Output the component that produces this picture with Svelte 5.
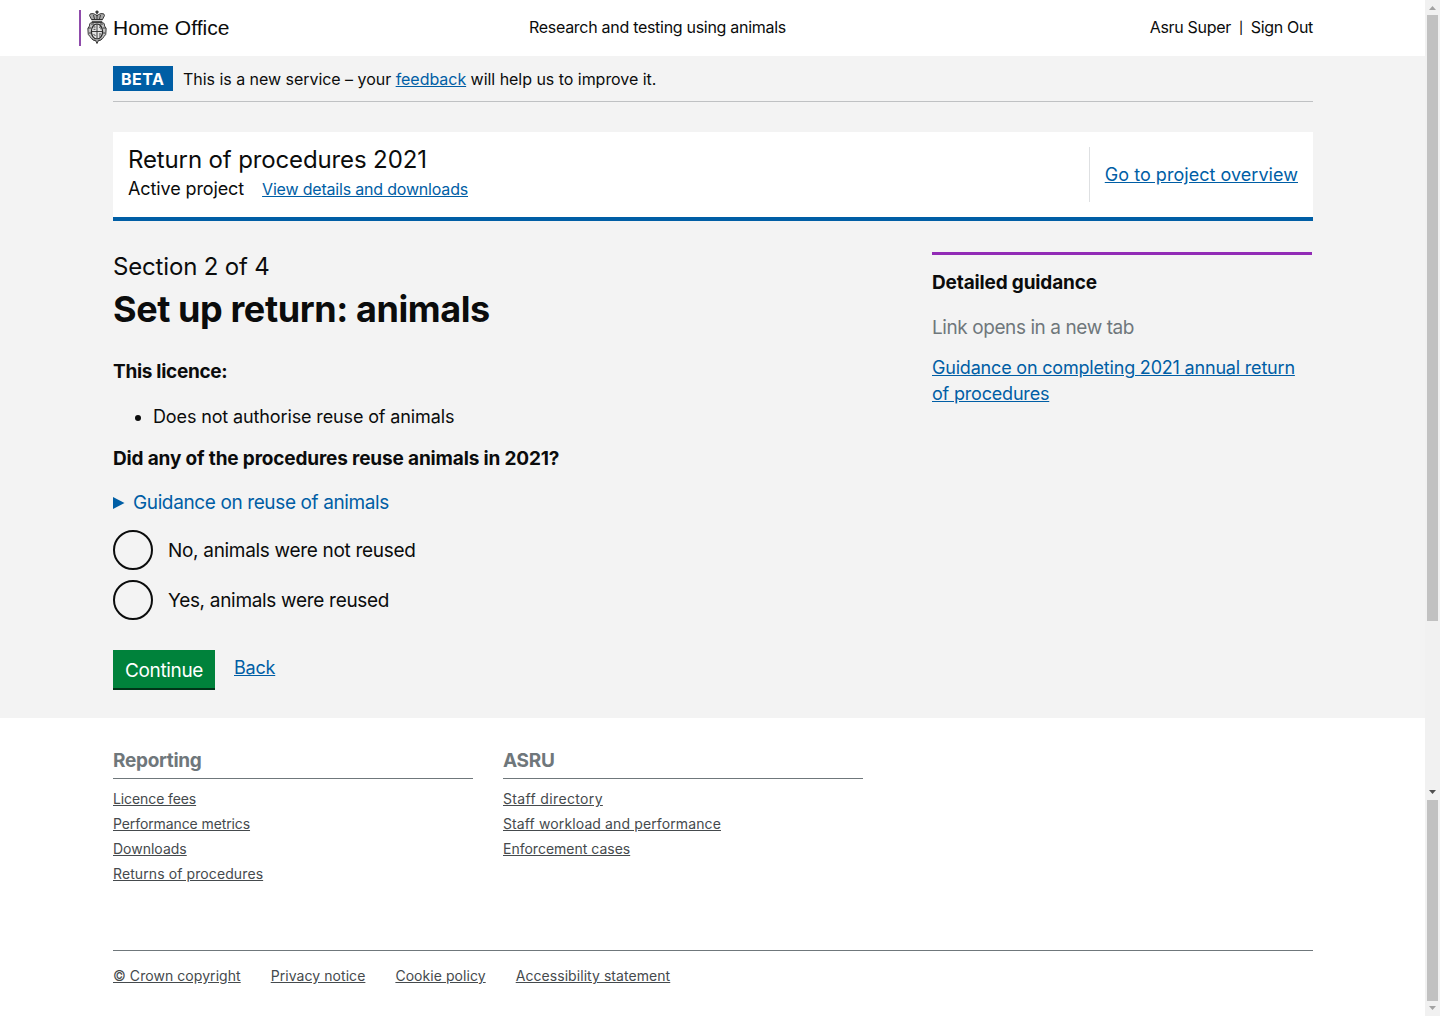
<script>
  const options = ['No, animals were not reused', 'Yes, animals were reused'];
  const columns = [
    { title: 'Reporting', links: ['Licence fees', 'Performance metrics', 'Downloads', 'Returns of procedures'] },
    { title: 'ASRU', links: ['Staff directory', 'Staff workload and performance', 'Enforcement cases'] }
  ];
  const legal = ['© Crown copyright', 'Privacy notice', 'Cookie policy', 'Accessibility statement'];
</script>

<div class="window">
  <div class="page">
    <header>
      <div class="logo">
        <svg class="crest" width="20" height="36" viewBox="0 0 20 36" fill="none" stroke="#2a2a2a" stroke-width="0.9">
          <path d="M10 0.500v4M8.400 2h3.200" stroke-width="1.400" />
          <path d="M2.500 5.500Q2.500 3 6 3.600Q8.500 4 10 6Q11.500 4 14 3.600Q17.500 3 17.500 5.500L15.500 9.500H4.500Z" fill="#aaa" />
          <path d="M4.500 9.700h11M4.800 11.400h10.400M10 5v4M6.500 5l1 4M13.500 5l-1 4" />
          <path d="M4.500 12.500Q2 13 2.500 16Q0 18 1 21Q.5 25 3 26.500Q4 29 7 30H13Q16 29 17 26.500Q19.500 25 19 21Q20 18 17.500 16Q18 13 15.500 12.500Z" fill="#c4c4c4" />
          <ellipse cx="10" cy="21.500" rx="5.600" ry="7.500" fill="#e4e4e4" stroke-width="1.200" />
          <path d="M10 14v15M4.500 21.500h11M6.500 17h2M6.500 19.300h2M12 17.500q2-2 2 0v2M6.500 24l2 2M12 24h2M12 26h1.500M1 18h3M16 18h3M2 23h2.500M15.500 23h2.500M4 14h3M13 14h3" />
          <path d="M5 29q2 2 3.500 1.500L10 33.500l1.500-3Q13 31 15 29" fill="#999" />
        </svg>
        <span>Home Office</span>
      </div>
      <div class="service">Research and testing using animals</div>
      <div class="user"><span>Asru Super</span><span class="divider">|</span><span>Sign Out</span></div>
    </header>

    <main>
      <div class="phase">
        <strong>BETA</strong>
        <span>This is a new service – your <a href="#feedback">feedback</a> will help us to improve it.</span>
      </div>

      <section class="banner">
        <div>
          <h2>Return of procedures 2021</h2>
          <div class="status"><span>Active project</span><a href="#details">View details and downloads</a></div>
        </div>
        <div class="overview"><a href="#overview">Go to project overview</a></div>
      </section>

      <div class="columns">
        <div class="form">
          <div class="section">Section 2 of 4</div>
          <h1>Set up return: animals</h1>
          <h3 class="licence">This licence:</h3>
          <ul><li>Does not authorise reuse of animals</li></ul>
          <h3>Did any of the procedures reuse animals in 2021?</h3>
          <div class="summary">
            <svg width="12" height="12" viewBox="0 0 12 12"><path d="M0 0L11.500 6L0 12Z" fill="#005ea5" /></svg>
            <span>Guidance on reuse of animals</span>
          </div>
          <div class="radios">
            {#each options as option}
              <div class="radio"><i></i><span>{option}</span></div>
            {/each}
          </div>
          <div class="actions"><button>Continue</button><a href="#back">Back</a></div>
        </div>
        <aside>
          <h3>Detailed guidance</h3>
          <p>Link opens in a new tab</p>
          <a href="#guidance">Guidance on completing 2021 annual return of procedures</a>
        </aside>
      </div>
    </main>

    <footer>
      <div class="groups">
        {#each columns as column}
          <div class="group">
            <h3>{column.title}</h3>
            {#each column.links as link}<div><a href="#link">{link}</a></div>{/each}
          </div>
        {/each}
      </div>
      <div class="legal">
        {#each legal as link}<a href="#legal">{link}</a>{/each}
      </div>
    </footer>
  </div>

  <div class="scrollbar">
    <svg width="15" height="15" viewBox="0 0 15 15"><path d="M4 10L7.500 6L11 10Z" fill="#a3a3a3" /></svg>
    <div class="thumb upper"></div>
    <svg class="mid" width="15" height="15" viewBox="0 0 15 15"><path d="M4 5L7.500 9L11 5Z" fill="#505050" /></svg>
    <div class="thumb lower"></div>
    <svg width="15" height="15" viewBox="0 0 15 15"><path d="M4 5L7.500 9L11 5Z" fill="#a3a3a3" /></svg>
  </div>
</div>

<style>
  :global(body) { margin: 0; overflow: hidden; }
  * { box-sizing: border-box; }
  .window { display: flex; width: 1440px; height: 1016px; font-family: Inter, sans-serif; color: #0b0c0c; font-size: 16px; line-height: 25px; }
  .page { width: 1425px; background: #fff; }
  h1, h2, h3, p, ul { margin: 0; font-size: 19px; line-height: 25px; }
  h3 { letter-spacing: -0.155px; }
  a { color: #005ea5; text-decoration: underline; }
  header { display: grid; grid-template-columns: 450px 1fr 400px; height: 56px; padding: 10px 112px 10px 79px; }
  .logo { display: flex; width: 180px; height: 36px; border-left: 2px solid #8f4bab; padding-left: 6px; }
  .logo span { margin-left: 6px; font: 21px/36px "Liberation Sans", Arial, sans-serif; color: #0b0c0c; white-space: nowrap; }
  .crest { flex: none; }
  .service { line-height: 35px; letter-spacing: -0.29px; }
  .user { display: flex; justify-content: flex-end; gap: 8px; line-height: 35px; letter-spacing: -0.32px; }
  .divider { font-size: 12px; font-weight: 500; }
  main { height: 662px; padding: 10px 112px 0 113px; background: #f3f3f3; }
  .phase { display: flex; gap: 10px; height: 36px; border-bottom: 1px solid #bfc1c3; }
  .phase strong { width: 60px; height: 25px; background: #005ea5; color: #fff; letter-spacing: 0.5px; font-weight: 700; padding-left: 8px; line-height: 26px; }
  .phase span { line-height: 26px; letter-spacing: -0.035px; }
  .banner { display: flex; justify-content: space-between; height: 89px; margin-top: 30px; padding: 15px; background: #fff; border-bottom: 4px solid #005ea5; }
  .banner h2 { font-size: 24px; line-height: 26px; font-weight: 400; letter-spacing: -0.13px; }
  .status { display: flex; gap: 18px; margin-top: 3px; font-size: 18px; letter-spacing: -0.11px; }
  .status a { font-size: 16px; line-height: 26px; letter-spacing: -0.19px; }
  .overview { height: 55px; border-left: 1px solid #dee0e2; padding-left: 15px; font-size: 18px; line-height: 55px; letter-spacing: 0.04px; }
  .columns { display: grid; grid-template-columns: 1fr 380px; margin-top: 31px; padding-right: 1px; }
  .section { font-size: 24px; line-height: 30px; letter-spacing: -0.17px; }
  h1 { margin-top: 7px; font-size: 36px; line-height: 40px; font-weight: 700; letter-spacing: -0.41px; }
  .licence { margin-top: 30px; letter-spacing: -0.3px; }
  ul { margin: 20px 0 16px; padding-left: 40px; font-size: 18px; line-height: 26px; letter-spacing: -0.13px; }
  .summary { display: flex; align-items: center; gap: 8px; height: 25px; margin-top: 19px; color: #005ea5; font-size: 19px; letter-spacing: -0.38px; }
  .radios { display: flex; flex-direction: column; gap: 10px; margin-top: 15px; font-size: 19px; letter-spacing: -0.31px; }
  .radio { display: flex; gap: 15px; line-height: 41px; height: 40px; }
  .radio i { width: 40px; height: 40px; border: 2px solid #0b0c0c; border-radius: 50%; }
  .actions { display: flex; gap: 19px; margin-top: 30px; font-size: 18px; line-height: 36px; letter-spacing: -0.2px; }
  button { width: 102px; height: 38px; padding: 2px 0 0; border: 0; background: #00823b; box-shadow: 0 2px 0 #003418; color: #fff; font: 19px/38px Inter, sans-serif; letter-spacing: -0.33px; }
  aside { border-top: 3px solid #912bb5; padding-top: 15px; font-size: 18px; line-height: 26px; }
  aside p { margin: 20px 0 15px; color: #6f777b; letter-spacing: -0.42px; }
  aside a { display: block; letter-spacing: -0.19px; }
  footer { padding: 30px 112px 0 113px; font-size: 14px; }
  .groups { display: flex; gap: 30px; height: 202px; }
  .group { width: 360px; }
  .group h3 { height: 31px; margin-bottom: 7px; border-bottom: 1px solid #6f777b; color: #6f777b; letter-spacing: -0.3px; }
  .group:first-child div:nth-of-type(-n + 2) { letter-spacing: -0.1px; }
  .group:first-child div:nth-of-type(4) { letter-spacing: 0.1px; }
  .group:last-child div:nth-of-type(1) { letter-spacing: 0.35px; }
  .group:last-child div:nth-of-type(2) { letter-spacing: 0.12px; }
  footer a { color: #454a4d; }
  .legal { display: flex; gap: 30px; padding-top: 12px; border-top: 1px solid #6f777b; letter-spacing: 0.06px; }
  .scrollbar { display: flex; flex-direction: column; width: 15px; background: #f1f1f1; }
  .thumb { width: 11px; margin-left: 2px; background: #c1c1c1; }
  .upper { height: 606px; }
  .mid { margin-top: 164px; }
  .lower { height: 201px; }
</style>
